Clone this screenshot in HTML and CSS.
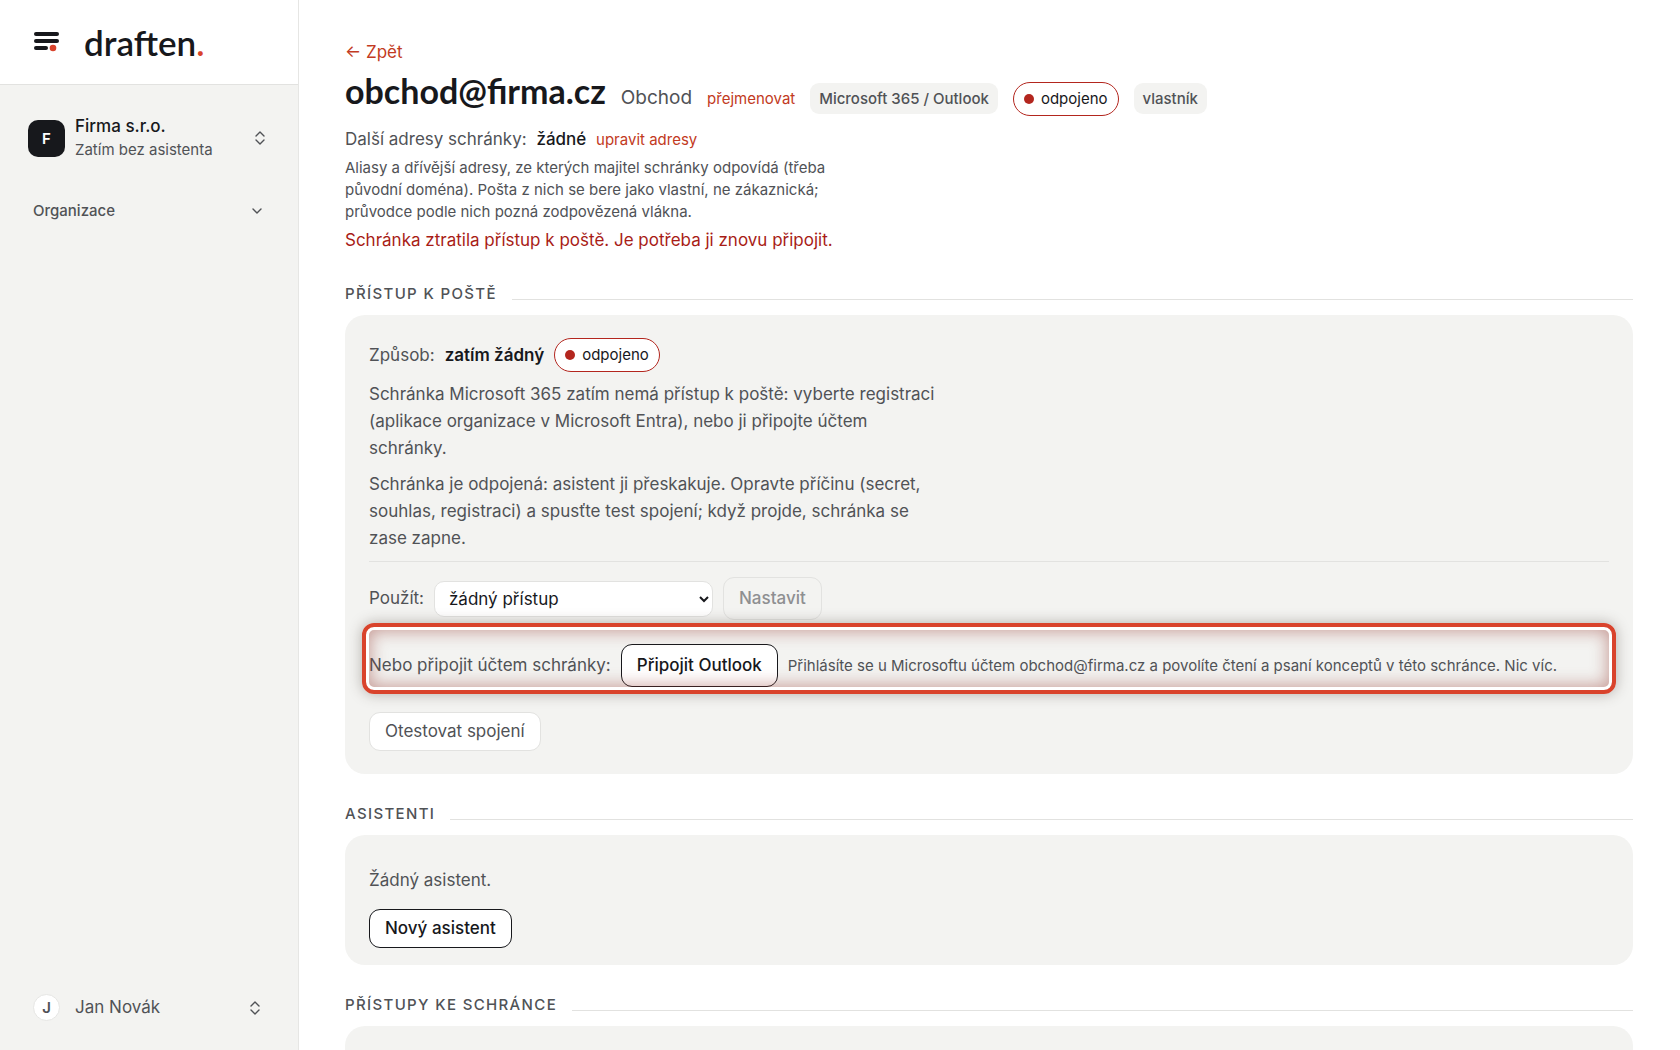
FILE: index.html
```html
<!DOCTYPE html>
<html lang="cs">
<head>
    <meta charset="UTF-8">
    <meta name="viewport" content="width=device-width, initial-scale=1.0">
    <title>obchod@firma.cz – draften</title>
    <link rel="stylesheet" href="styles.css">
</head>
<body>
    <aside class="sidebar">
        <a class="brand" href="#" aria-label="draften">
            <svg width="26" height="20" viewBox="0 0 26 20">
                <g fill="#17181c">
                    <rect x="0" y="0" width="25" height="4" rx="2"/>
                    <rect x="0" y="7" width="25" height="4" rx="2"/>
                    <rect x="0" y="14" width="14" height="4" rx="2"/>
                </g>
                <circle cx="19" cy="16" r="3.3" fill="#d9432c"/>
            </svg>
            <span class="brand-name">draften<i>.</i></span>
        </a>

        <button class="org">
            <span class="org-logo">F</span>
            <span class="org-text">
                <span class="org-name">Firma s.r.o.</span>
                <span class="org-sub">Zatím bez asistenta</span>
            </span>
            <svg class="icon" width="10" height="14" viewBox="0 0 10 14"><path d="M1 5l4-4 4 4M1 9l4 4 4-4"/></svg>
        </button>

        <button class="group">
            <span>Organizace</span>
            <svg class="icon" width="10" height="6" viewBox="0 0 10 6"><path d="M1 1l4 4 4-4"/></svg>
        </button>

        <button class="user">
            <span class="avatar">J</span>
            <span>Jan Novák</span>
            <svg class="icon" width="10" height="14" viewBox="0 0 10 14"><path d="M1 5l4-4 4 4M1 9l4 4 4-4"/></svg>
        </button>
    </aside>

    <main>
        <a class="back" href="#">← Zpět</a>
        <div class="title">
            <h1>obchod@firma.cz</h1>
            <span class="label">Obchod</span>
            <a class="small-link" href="#">přejmenovat</a>
            <span class="tag">Microsoft 365 / Outlook</span>
            <span class="status">odpojeno</span>
            <span class="tag">vlastník</span>
        </div>
        <p class="addresses">Další adresy schránky: <b>žádné</b> <a class="small-link" href="#">upravit adresy</a></p>
        <p class="hint">Aliasy a dřívější adresy, ze kterých majitel schránky odpovídá (třeba původní doména). Pošta z nich se bere jako vlastní, ne zákaznická; průvodce podle nich pozná zodpovězená vlákna.</p>
        <p class="error">Schránka ztratila přístup k poště. Je potřeba ji znovu připojit.</p>

        <h2>Přístup k poště</h2>
        <section class="card">
            <div class="row">
                <span>Způsob:</span>
                <strong>zatím žádný</strong>
                <span class="status">odpojeno</span>
            </div>
            <p class="text">Schránka Microsoft 365 zatím nemá přístup k poště: vyberte registraci (aplikace organizace v Microsoft Entra), nebo ji připojte účtem schránky.</p>
            <p class="text">Schránka je odpojená: asistent ji přeskakuje. Opravte příčinu (secret, souhlas, registraci) a spusťte test spojení; když projde, schránka se zase zapne.</p>
            <div class="row access">
                <label for="access">Použít:</label>
                <select id="access">
                    <option>žádný přístup</option>
                </select>
                <button class="btn tall" disabled>Nastavit</button>
            </div>
            <div class="row connect">
                <span>Nebo připojit účtem schránky:</span>
                <button class="btn tall primary">Připojit Outlook</button>
                <small>Přihlásíte se u Microsoftu účtem obchod@firma.cz a povolíte čtení a psaní konceptů v této schránce. Nic víc.</small>
            </div>
            <button class="btn">Otestovat spojení</button>
        </section>

        <h2>Asistenti</h2>
        <section class="card assistants">
            <p>Žádný asistent.</p>
            <button class="btn primary">Nový asistent</button>
        </section>

        <h2>Přístupy ke schránce</h2>
        <section class="card members"></section>
    </main>
</body>
</html>
```
FILE: styles.css
```css
* {
    box-sizing: border-box;
}

body {
    margin: 0;
    height: 100vh;
    display: flex;
    background: #fff;
    color: #505256;
    font: 17px/27px Inter, "Liberation Sans", sans-serif;
}

h1, h2, p {
    margin: 0;
}

button, select {
    font: inherit;
    color: inherit;
}

a {
    color: #c23a22;
    text-decoration: none;
}

.icon {
    fill: none;
    stroke: #505256;
    stroke-width: 1.4;
    stroke-linecap: round;
    stroke-linejoin: round;
    margin-left: auto;
}

/* sidebar */
.sidebar {
    flex: 0 0 299px;
    display: flex;
    flex-direction: column;
    background: #f3f3f1;
    border-right: 1px solid #e6e6e4;
}

.brand {
    display: flex;
    align-items: center;
    gap: 24px;
    height: 85px;
    padding: 0 34px;
    background: #fff;
    border-bottom: 1px solid #e2e2e0;
}

.brand-name {
    color: #17181c;
    font: 600 35px/40px Lato, sans-serif;
}

.brand-name i {
    color: #d9432c;
    font-style: normal;
}

.sidebar button {
    display: flex;
    align-items: center;
    border: 0;
    background: none;
    text-align: left;
    cursor: pointer;
}

.org {
    margin-top: 29px;
    padding: 0 33px 0 28px;
    gap: 10px;
}

.org-logo {
    width: 37px;
    height: 37px;
    border-radius: 10px;
    background: #17181c;
    color: #fff;
    font-size: 15px;
    font-weight: 600;
    line-height: 37px;
    text-align: center;
}

.org-text {
    display: flex;
    flex-direction: column;
    line-height: 24px;
}

.org-name {
    color: #17181c;
    font-weight: 500;
}

.org-sub {
    font-size: 15px;
}

.group {
    margin-top: 35px;
    padding: 0 36px 0 33px;
    font-size: 15px;
    font-weight: 500;
}

.user {
    margin-top: auto;
    margin-bottom: 29px;
    padding: 0 38px 0 33px;
    gap: 15px;
}

.avatar {
    width: 27px;
    height: 27px;
    border: 1px solid #e6e6e4;
    border-radius: 50%;
    background: #fff;
    font-size: 15px;
    font-weight: 600;
    line-height: 26px;
    text-align: center;
}

/* content */
main {
    flex: 1;
    min-width: 0;
    padding: 39px 47px 0 46px;
    overflow-y: auto;
    scrollbar-width: none;
}

.back {
    display: block;
}

.title {
    display: flex;
    align-items: baseline;
    gap: 15px;
    margin-top: 3px;
}

h1 {
    color: #17181c;
    font: 700 34px/44px Lato, sans-serif;
}

.label {
    font-size: 19px;
}

.small-link {
    font-size: 15px;
}

.tag {
    padding: 4px 9px;
    border-radius: 9px;
    background: #f3f3f1;
    font-size: 15px;
    font-weight: 500;
    line-height: 23px;
}

.status {
    display: inline-flex;
    align-items: center;
    gap: 7px;
    padding: 4px 10px;
    border: 1px solid #b3261e;
    border-radius: 17px;
    background: #fff;
    color: #17181c;
    font-size: 15px;
    line-height: 24px;
}

.status::before {
    content: "";
    width: 10px;
    height: 10px;
    border-radius: 50%;
    background: #b3261e;
}

.addresses {
    margin-top: 10px;
}

.addresses b {
    margin: 0 5px;
    color: #17181c;
    font-weight: 500;
}

.hint {
    max-width: 510px;
    margin-top: 4px;
    font-size: 15px;
    line-height: 22px;
}

.error {
    margin-top: 4px;
    color: #a81c16;
}

h2 {
    display: flex;
    align-items: center;
    gap: 15px;
    margin: 29px 0 10px;
    font-size: 15px;
    font-weight: 500;
    line-height: 22px;
    letter-spacing: 0.09em;
    text-transform: uppercase;
}

h2::after {
    content: "";
    flex: 1;
    margin-top: 10px;
    border-top: 1px solid #e2e2e0;
}

.card {
    padding: 23px 24px;
    border-radius: 20px;
    background: #f3f3f1;
}

.row {
    display: flex;
    align-items: center;
    gap: 10px;
}

.row strong {
    color: #17181c;
    font-weight: 600;
}

.row small {
    font-size: 15px;
}

.text {
    max-width: 570px;
    margin-top: 9px;
}

.access {
    margin-top: 9px;
    padding-top: 15px;
    border-top: 1px solid #e2e2e0;
}

select {
    width: 279px;
    height: 36px;
    padding: 0 10px;
    border: 1px solid #e2e2e0;
    border-radius: 10px;
    background: #fff;
    color: #17181c;
}

.btn {
    height: 39px;
    padding: 0 15px;
    border: 1px solid #e2e2e0;
    border-radius: 11px;
    background: #fff;
    cursor: pointer;
}

.btn.tall {
    height: 43px;
}

.btn:disabled {
    background: none;
    color: #8e8f91;
    font-weight: 500;
}

.btn.primary {
    border-color: #17181c;
    color: #17181c;
    font-weight: 500;
}

.connect {
    position: relative;
    margin: 9px 0 24px;
    padding: 15px 0 1px;
}

/* highlight ring around the row */
.connect::after {
    content: "";
    position: absolute;
    inset: -6px -7px;
    border: 4px solid #d9432c;
    border-radius: 12px;
    box-shadow: 0 0 14px rgba(60, 50, 40, 0.35), inset 0 0 0 3px #fff, inset 0 0 16px 5px rgba(150, 60, 50, 0.45);
    pointer-events: none;
}

.assistants {
    padding: 32px 24px 17px;
}

.assistants p {
    margin-bottom: 15px;
}

.members {
    min-height: 130px;
}
```
